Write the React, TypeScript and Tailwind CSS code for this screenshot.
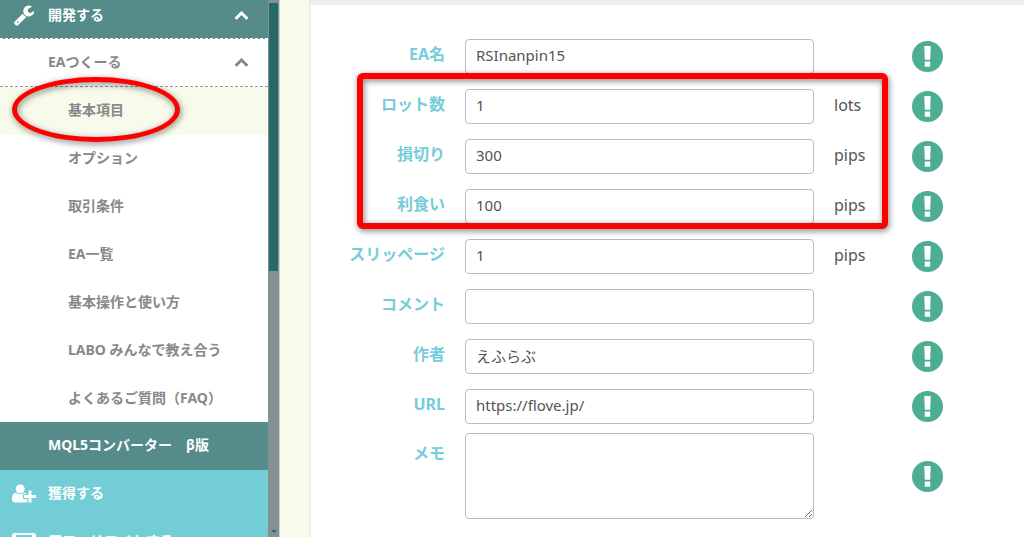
import type { ReactNode } from "react";

const subItems = ["オプション", "取引条件", "EA一覧", "基本操作と使い方", "LABO みんなで教え合う", "よくあるご質問（FAQ）"];

type Field = { id: string; label: string; value: string; unit?: string };

const nameField: Field = { id: "ea-name", label: "EA名", value: "RSInanpin15" };

const tradeFields: Field[] = [
  { id: "lots", label: "ロット数", value: "1", unit: "lots" },
  { id: "stop-loss", label: "損切り", value: "300", unit: "pips" },
  { id: "take-profit", label: "利食い", value: "100", unit: "pips" },
];

const otherFields: Field[] = [
  { id: "slippage", label: "スリッページ", value: "1", unit: "pips" },
  { id: "comment", label: "コメント", value: "" },
  { id: "author", label: "作者", value: "えふらぶ" },
  { id: "url", label: "URL", value: "https://flove.jp/" },
];

const WrenchIcon = () => (
  <svg viewBox="0 0 1792 1792" className="size-[22px] fill-current" aria-hidden="true">
    <path d="M448 1472q0-26-19-45t-45-19-45 19-19 45 19 45 45 19 45-19 19-45zm644-420l-682 682q-37 37-90 37-52 0-91-37l-106-108q-38-36-38-90 0-53 38-91l681-681q39 98 114.5 173.5t173.5 114.5zm634-435q0 39-23 106-47 134-164.5 217.5t-258.5 83.5q-185 0-316.5-131.5t-131.5-316.5 131.5-316.5 316.5-131.5q58 0 121.5 16.5t107.5 46.5q16 11 16 28t-16 28l-293 169v224l193 107q5-3 79-48.5t135.5-81 70.5-35.5q15 0 23.5 10t8.5 25z" />
  </svg>
);

const UserPlusIcon = () => (
  <svg viewBox="0 0 2048 1792" className="h-[21px] w-6 fill-current" aria-hidden="true">
    <path d="M704 896q-159 0-271.5-112.5t-112.5-271.5 112.5-271.5 271.5-112.5 271.5 112.5 112.5 271.5-112.5 271.5-271.5 112.5zm960 128h352q13 0 22.5 9.5t9.5 22.5v192q0 13-9.5 22.5t-22.5 9.5h-352v352q0 13-9.5 22.5t-22.5 9.5h-192q-13 0-22.5-9.5t-9.5-22.5v-352h-352q-13 0-22.5-9.5t-9.5-22.5v-192q0-13 9.5-22.5t22.5-9.5h352v-352q0-13 9.5-22.5t22.5-9.5h192q13 0 22.5 9.5t9.5 22.5v352zm-736 224q0 52 38 90t90 38h256v238q-68 50-171 50h-874q-121 0-194-69t-73-190q0-53 3.5-103.5t14-109 26.5-108.5 43-97.5 62-81 85.5-53.5 111.5-20q19 0 39 17 79 61 154.5 91.5t164.5 30.5 164.5-30.5 154.5-91.5q20-17 39-17 132 0 217 96h-223q-52 0-90 38t-38 90v192z" />
  </svg>
);

const WindowIcon = () => (
  <svg viewBox="0 0 24 16" className="h-4 w-6 fill-current" aria-hidden="true">
    <path d="M2 0h20a2 2 0 0 1 2 2v12a2 2 0 0 1-2 2H2a2 2 0 0 1-2-2V2a2 2 0 0 1 2-2zm2 2v11h16V2z" />
  </svg>
);

const ChevronUp = () => (
  <svg viewBox="0 0 1792 1792" className="size-[15px] fill-current" aria-hidden="true">
    <path d="M1683 1331l-166 165q-19 19-45 19t-45-19l-531-531-531 531q-19 19-45 19t-45-19l-166-165q-19-19-19-45.5t19-45.5l742-741q19-19 45-19t45 19l742 741q19 19 19 45.5t-19 45.5z" />
  </svg>
);

const HelpButton = ({ label }: { label: string }) => (
  <button type="button" aria-label={label} className="size-[31px] rounded-full">
    <svg viewBox="0 0 31 31" className="size-[31px]" aria-hidden="true">
      <circle cx="15.5" cy="15.5" r="15.5" fill="#4dae94" />
      <path d="M12.3 5h6.4l-.5 13.8h-5.4zM12.8 20.5h5.4v5.2h-5.4z" fill="#fff" />
    </svg>
  </button>
);

const FormRow = ({ field }: { field: Field }) => (
  <div className="grid h-[50px] grid-cols-[134px_minmax(0,1fr)_58px_112px] items-center gap-x-5">
    <label htmlFor={field.id} className="pb-1 text-right font-bold text-[#75cdd8]">
      {field.label}
    </label>
    <input
      id={field.id}
      type="text"
      defaultValue={field.value}
      className="h-[35px] w-full rounded border border-[#bbb] bg-white px-2.5 pb-0.5 text-[15px] text-[#555]"
    />
    <span className="pb-0.5">{field.unit}</span>
    <HelpButton label={field.label} />
  </div>
);

const MainLink = ({ icon, children }: { icon?: ReactNode; children: ReactNode }) => (
  <a href="#" className="flex h-12 items-center pb-0.5 text-white">
    <span className="flex w-12 justify-center">{icon}</span>
    {children}
  </a>
);

const Sidebar = () => (
  <aside className="flex w-[280px] shrink-0 overflow-hidden bg-[#839291]">
    <nav className="-mt-[9px] w-[268px] text-sm font-bold text-[#888]">
      <button type="button" className="flex h-12 w-full items-center border-b border-dashed border-white bg-[#558b89] pr-[19px] text-white">
        <span className="flex w-12 justify-center">
          <WrenchIcon />
        </span>
        <span className="flex-1 text-left">開発する</span>
        <ChevronUp />
      </button>
      <div className="bg-white">
        <button type="button" className="flex h-12 w-full items-center border-b border-dashed border-[#999] pr-[19px] pb-0.5 pl-12">
          <span className="flex-1 text-left">EAつくーる</span>
          <ChevronUp />
        </button>
        <div className="relative">
          <a href="#" className="flex h-12 items-center bg-[#f8faeb] pb-0.5 pl-[68px]">
            基本項目
          </a>
          <div className="pointer-events-none absolute -top-2.5 left-3 z-10 h-[65px] w-[168px] rounded-[50%] border-5 border-[#ff0000] drop-shadow-[1px_2px_3px_rgba(0,0,0,0.5)]" />
        </div>
        {subItems.map((item) => (
          <a key={item} href="#" className="flex h-12 items-center pb-0.5 pl-[68px]">
            {item}
          </a>
        ))}
      </div>
      <div className="-mt-px bg-[#558b89]">
        <MainLink>MQL5コンバーター　β版</MainLink>
      </div>
      <div className="bg-[#73cdd6]">
        <MainLink icon={<UserPlusIcon />}>獲得する</MainLink>
        <MainLink icon={<WindowIcon />}>アフィリエイトする</MainLink>
      </div>
    </nav>
    {/* Scroll track */}
    <div className="flex flex-1 flex-col items-center justify-between border-r border-[#ccd2d0] pt-[3px]">
      <div className="h-[268px] w-[9px] bg-[#266a68]" />
      <svg viewBox="0 0 6 3" className="mb-1 h-[3px] w-1.5 fill-[#266a68]" aria-hidden="true">
        <path d="M0 0h6L3 3z" />
      </svg>
    </div>
  </aside>
);

const App = () => {
  return (
    <div className="flex h-screen overflow-hidden bg-[#f8faeb] font-['Noto_Sans','Noto_Sans_CJK_JP',sans-serif] text-base text-[#555]">
      <Sidebar />
      <main className="ml-[29px] min-w-0 flex-1 border-l-2 border-[#eee] bg-white">
        <div className="h-[5px] bg-[#eee]" />
        <form className="pt-[26px]">
          <FormRow field={nameField} />
          <div className="relative">
            {tradeFields.map((field) => (
              <FormRow key={field.id} field={field} />
            ))}
            {/* Highlight around the trade settings */}
            <div className="pointer-events-none absolute -top-2 right-[136px] bottom-0.5 left-[46px] rounded-md border-6 border-[#ff0000] drop-shadow-[1px_2px_3px_rgba(0,0,0,0.5)]" />
          </div>
          {otherFields.map((field) => (
            <FormRow key={field.id} field={field} />
          ))}
          <div className="grid grid-cols-[134px_minmax(0,1fr)_58px_112px] items-center gap-x-5 pt-0.5">
            <label htmlFor="memo" className="self-start pt-2 text-right font-bold text-[#75cdd8]">
              メモ
            </label>
            <textarea id="memo" className="block h-[86px] w-full resize rounded border border-[#bbb] bg-white px-2.5 py-1 text-[15px]" />
            <span />
            <HelpButton label="メモ" />
          </div>
        </form>
      </main>
    </div>
  );
};

export default App;
